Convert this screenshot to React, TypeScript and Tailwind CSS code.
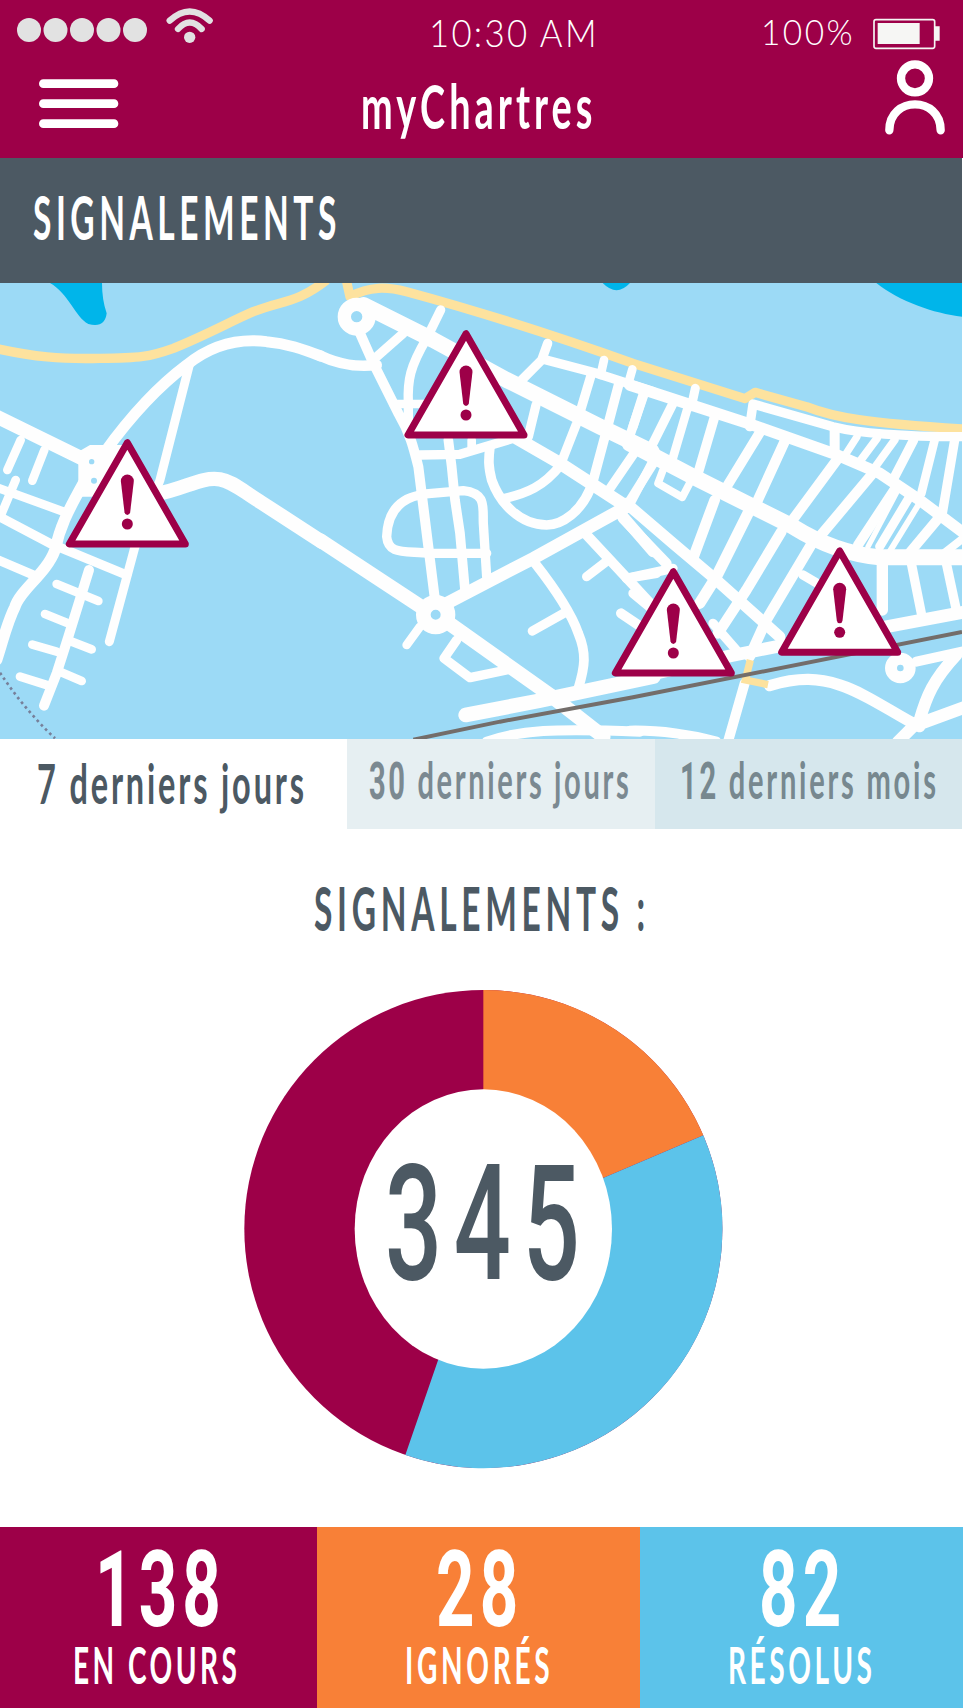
const WHITE = "#fefefe";
const BEACH = "#fde29e";

function Alert({ x, y }: { x: number; y: number }) {
  return (
    <g transform={`translate(${x} ${y})`}>
      <path d="M0 10 L-174 314 L174 314 Z" fill="#fff" stroke="#9d0048" strokeWidth="21" strokeLinejoin="round" />
      <path d="M-19.500 125 A19.500 19.500 0 0 1 19.500 125 L8.500 219 Q7 227 0 227 Q-7 227 -8.500 219 Z" fill="#9d0048" />
      <circle cx="0" cy="254" r="16.500" fill="#9d0048" />
    </g>
  );
}

type Road = [string, number];

const west: Road[] = [
  ["M315 515C420 370 500 300 560 255C640 190 720 175 800 185C860 190 910 208 962 228", 33],
  ["M568 255L480 600L405 800L328 1085", 27],
  ["M470 642C560 625 600 590 660 598C700 605 730 635 780 665L965 785", 43],
  ["M-10 410L245 535", 42],
  ["M62 480L22 570", 26],
  ["M133 510L97 602", 26],
  ["M250 610C200 700 180 740 165 810C140 880 60 930 45 980C20 1030 10 1080 -10 1140", 34],
  ["M-10 622L190 695", 26],
  ["M47 600L0 712", 26],
  ["M-10 706L150 790L380 885", 28],
  ["M-10 838L100 885", 28],
  ["M267 870L205 1070L170 1180L132 1277", 30],
  ["M170 912L295 963", 26],
  ["M135 1002L200 1028", 26],
  ["M97 1094L170 1115", 26],
  ["M215 1085L275 1108", 26],
  ["M60 1190L140 1215", 26],
  ["M180 1175L245 1203", 26],
];

const centre: Road[] = [
  ["M0 227C60 255 110 262 170 255", 32],
  ["M120 160L160 250L235 400C270 460 280 500 295 560L345 960", 30],
  ["M165 235L250 160", 28],
  ["M362 90L320 175C270 260 262 300 265 370V440", 28],
  ["M220 372H330", 26],
  ["M130 75L340 180L560 300L840 440L995 515", 48],
  ["M683 190L665 240L595 310", 28],
  ["M670 238L830 280L1000 335", 28],
  ["M852 240L842 285", 26],
  ["M937 268L925 310", 26],
  ["M812 290L770 430L725 545", 28],
  ["M648 375L625 470", 28],
  ["M897 310L860 450L820 600C790 700 720 735 680 735C600 735 540 670 515 600C505 560 505 540 510 500", 29],
  ["M300 525L420 523L580 475", 28],
  ["M590 475L720 550L920 680", 38],
  ["M722 555C670 620 620 640 555 655", 28],
  ["M385 480L395 560L405 660L420 760L435 930", 29],
  ["M455 480V510", 26],
  ["M300 645C220 660 202 720 200 770C205 825 250 812 330 820H500", 28],
  ["M300 643L430 632C500 640 488 680 490 730L500 890", 28],
  ["M380 970L640 835L920 680", 38],
  ["M942 520L870 625", 28],
  ["M1000 550L925 670", 28],
  ["M973 340L925 480", 28],
  ["M0 781L310 985", 43],
  ["M300 1040L260 1095", 26],
  ["M380 1025L690 1245L850 1370", 43],
  ["M410 1080L372 1135L450 1193L560 1170", 28],
  ["M437 1305L660 1262L1000 1190", 44],
  ["M645 850C700 920 750 990 775 1060C800 1120 795 1160 775 1225", 29],
  ["M637 1053L740 995", 28],
  ["M800 765L870 840L1000 980", 30],
  ["M865 840L800 890", 28],
  ["M900 700L1000 815", 34],
  ["M920 895L1010 880", 28],
  ["M903 1000L970 1045", 30],
  ["M500 1385C600 1350 700 1345 960 1355", 30],
];

const east: Road[] = [
  ["M-10 490L180 590L480 740C560 790 640 822 740 832H990", 48],
  ["M-10 315L345 430L600 520L740 580L860 660L1000 765", 34],
  ["M30 345L0 440", 28],
  ["M120 370L50 510", 28],
  ["M162 390L115 550", 26],
  ["M245 410L195 580", 29],
  ["M58 545L-5 665", 26],
  ["M90 570L75 610L148 652L170 610", 23],
  ["M-20 670L120 790L250 900L440 1070", 34],
  ["M-30 715L100 850", 32],
  ["M-20 895L120 865", 28],
  ["M0 940L60 990", 28],
  ["M245 660L180 835", 32],
  ["M350 690L250 890L200 970", 34],
  ["M445 755L340 930L255 1060", 32],
  ["M537 790L400 1020L350 1130", 32],
  ["M510 885L570 920", 28],
  ["M240 1030L310 1110", 28],
  ["M382 455L275 630", 30],
  ["M457 480L370 670", 31],
  ["M615 535L475 725", 31],
  ["M715 585L560 770", 31],
  ["M790 620L675 795", 30],
  ["M795 630L705 800", 16],
  ["M830 650L740 800", 27],
  ["M865 660L770 815", 18],
  ["M912 720L820 830", 30],
  ["M990 775L920 830", 24],
  ["M350 440L360 372L600 440C700 465 850 470 1000 470", 28],
  ["M605 450V520", 30],
  ["M672 470L640 520", 22],
  ["M732 475L680 545", 24],
  ["M785 480L720 570", 24],
  ["M842 480L780 600", 28],
  ["M905 480L865 640", 26],
  ["M965 480L928 700", 28],
  ["M187 325L175 380", 27],
  ["M748 850V990", 34],
  ["M835 850L865 1000", 28],
  ["M940 850L970 990", 28],
  ["M-10 1198L290 1128L440 1098L760 1040L1000 995", 38],
  ["M850 1145L1000 1112", 30],
  ["M970 1125C900 1200 880 1250 860 1320L795 1385", 36],
  ["M850 1335L1000 1280", 38],
  ["M410 1217C500 1190 560 1195 620 1215C700 1240 780 1300 860 1340", 34],
  ["M335 1210L285 1385", 30],
  ["M-10 1352C80 1350 180 1365 250 1385", 30],
];

function Roads({ items }: { items: Road[] }) {
  return (
    <g fill="none" stroke={WHITE} strokeLinecap="round" strokeLinejoin="round">
      {items.map(([d, w]) => (
        <path key={d} d={d} strokeWidth={w} />
      ))}
    </g>
  );
}

function CityMap() {
  return (
    <svg viewBox="0 9 2886 1368" preserveAspectRatio="none" className="block h-[456px] w-[962px] bg-[#9cdaf6]">
      <path d="M150 9C205 40 225 110 265 132Q315 145 320 100Q306 60 306 9Z" fill="#00b5ea" />
      <path d="M1808 9Q1850 52 1890 9Z" fill="#00b5ea" />
      <path d="M2629 9C2700 65 2800 100 2886 110V9Z" fill="#00b5ea" />
      <g fill="none" stroke={BEACH} strokeWidth="28" strokeLinejoin="round">
        <path d="M-10 206C100 230 180 238 300 235C420 235 450 230 520 205C620 165 700 120 760 95C850 60 890 70 980 0" />
        <path d="M1040 5L1050 50C1110 18 1160 20 1220 35C1460 100 1660 165 1899 250L2235 356L2265 337L2419 380C2500 412 2600 430 2890 447" />
      </g>
      <Roads items={west} />
      <path d="M235 515L270 495H370L320 650H235Z" fill={WHITE} />
      <circle cx="275" cy="545" r="8" fill="#9cdaf6" />
      <circle cx="282" cy="602" r="9" fill="#9cdaf6" />
      <path d="M0 1178Q70 1285 165 1375" fill="none" stroke="#77809a" strokeWidth="8" strokeDasharray="8 10" />
      <g transform="translate(960 0)">
        <Roads items={centre} />
        <circle cx="110" cy="110" r="37" fill="#9cdaf6" stroke={WHITE} strokeWidth="40" />
        <circle cx="347" cy="1004" r="37" fill="#9cdaf6" stroke={WHITE} strokeWidth="44" />
      </g>
      <g transform="translate(1899 0)">
        <Roads items={east} />
        <circle cx="802" cy="1164" r="28" fill="#9cdaf6" stroke={WHITE} strokeWidth="36" />
        <path d="M352 1140L337 1200L405 1214" fill="none" stroke={BEACH} strokeWidth="22" />
      </g>
      <path d="M1240 1379L1500 1325L1899 1252L2886 1056" fill="none" stroke="#736d6a" strokeWidth="12" />
      <Alert x={382} y={478} />
      <Alert x={1398} y={151} />
      <Alert x={2020} y={865} />
      <Alert x={2519} y={803} />
    </svg>
  );
}

function Donut() {
  return (
    <svg viewBox="-1 0 1440 1440" className="block h-[480px] w-[480px]">
      <circle cx="720" cy="720" r="717" fill="#9d0048" />
      <path d="M720 720V3A717 717 0 0 1 1380 439Z" fill="#f88037" />
      <path d="M720 720L1380 439A717 717 0 0 1 486 1398Z" fill="#5cc3ea" />
      <ellipse cx="720" cy="720" rx="386" ry="419" fill="#fff" />
    </svg>
  );
}

export default function App() {
  return (
    <div className="w-[963px] overflow-hidden bg-white font-['Lato',sans-serif] text-[#4c5963]">
      <header className="h-[158px] bg-[#9d0048] text-white">
        <div className="flex h-[56px] items-start">
          <svg viewBox="0 0 660 168" className="h-[56px] w-[220px]">
            <g fill="#e2e2e2">
              <circle cx="87" cy="90" r="36" />
              <circle cx="166.500" cy="90" r="36" />
              <circle cx="246" cy="90" r="36" />
              <circle cx="325.500" cy="90" r="36" />
              <circle cx="405" cy="90" r="36" />
              <circle cx="569" cy="112" r="17" />
            </g>
            <path d="M509 62Q569 7 629 62M534 87Q569 48 605 87" fill="none" stroke="#e2e2e2" strokeWidth="19" strokeLinecap="round" />
          </svg>
          <div className="ml-[209px] w-[332px] pt-[10px]">
            <span className="block origin-left scale-x-[0.94] whitespace-nowrap text-[37px] leading-[46px] font-light tracking-[2.4px]">10:30 AM</span>
          </div>
          <div className="w-[111px] pt-[8px]">
            <span className="block origin-left scale-x-[0.93] whitespace-nowrap text-[36px] leading-[46px] font-light tracking-[2.6px]">100%</span>
          </div>
          <svg viewBox="0 0 204 96" className="mt-[18px] h-[32px] w-[68px]">
            <rect x="6" y="5" width="182" height="86" rx="6" fill="none" stroke="#f6f6f4" strokeWidth="5" />
            <path d="M17 15H143V78H17ZM188 25H203V68H188Z" fill="#f6f6f4" />
          </svg>
        </div>
        <div className="flex items-start">
          <svg viewBox="0 0 240 150" className="mt-[22px] ml-[39px] h-[50px] w-[80px]">
            <path d="M13 17H225M13 77H225M13 137H225" stroke="#fff" strokeWidth="26" strokeLinecap="round" />
          </svg>
          <div className="ml-[242px] w-[523px] pt-[15px]">
            <span className="block origin-left scale-x-[0.62] whitespace-nowrap text-[61px] leading-[70px] font-bold tracking-[6.5px]">myChartres</span>
          </div>
          <svg viewBox="0 0 186 228" className="mt-[3px] h-[76px] w-[62px]">
            <g fill="none" stroke="#fff" strokeWidth="25" strokeLinecap="round">
              <circle cx="93" cy="58" r="42" />
              <path d="M16 214C16 110 170 110 170 214" />
            </g>
          </svg>
        </div>
      </header>
      <div className="h-[125px] w-[962px] bg-[#4c5963] pt-[23px] pl-[33px] text-white">
        <h1 className="origin-left scale-x-[0.54] whitespace-nowrap text-[62px] leading-[70px] font-bold tracking-[8.4px]">SIGNALEMENTS</h1>
      </div>
      <CityMap />
      <nav className="flex h-[90px] w-[962px]">
        <div className="w-[347px] pt-[9px] pl-[37px]">
          <span className="block w-[310px] origin-left scale-x-[0.58] whitespace-nowrap text-[56px] leading-[70px] font-bold tracking-[4.9px]">7 derniers jours</span>
        </div>
        <div className="w-[308px] bg-[#e6eff2] pt-[5px] pl-[22px] text-[#7b8991]">
          <span className="inline-block origin-left scale-x-[0.56] whitespace-nowrap text-[52px] leading-[70px] font-bold tracking-[4.7px]"><span className="font-['Roboto']">30</span> derniers jours</span>
        </div>
        <div className="w-[307px] bg-[#d6e7ed] pt-[5px] pl-[25px] text-[#77888f]">
          <span className="inline-block origin-left scale-x-[0.56] whitespace-nowrap text-[52px] leading-[70px] font-bold tracking-[4.9px]"><span className="font-['Roboto']">12</span> derniers mois</span>
        </div>
      </nav>
      <div className="h-[160px] pt-[43px] pl-[314px]">
        <h2 className="inline-block origin-left scale-x-[0.54] whitespace-nowrap text-[62px] leading-[70px] font-bold tracking-[8.7px]">SIGNALEMENTS :</h2>
      </div>
      <main className="grid h-[538px] grid-cols-[480px] pl-[243px]">
        <div className="col-start-1 row-start-1"><Donut /></div>
        <div className="col-start-1 row-start-1 pt-[135px] pl-[142px]">
          <span className="inline-block origin-left scale-x-[0.62] whitespace-nowrap font-['Roboto'] text-[162px] leading-[200px] font-medium tracking-[19px]">345</span>
        </div>
      </main>
      <footer className="flex h-[181px] text-white">
        <div className="w-[317px] bg-[#9d0048] pt-[19px] pl-[95px]">
          <span className="block origin-left whitespace-nowrap"><span className="inline-block origin-left scale-x-[0.64] font-['Roboto'] text-[105px] leading-[90px] font-bold tracking-[8px]">138</span></span>
          <div className="mt-[3px] -ml-[22px]"><span className="inline-block origin-left scale-x-[0.54] whitespace-nowrap text-[52px] leading-[50px] font-bold tracking-[6.4px]">EN COURS</span></div>
        </div>
        <div className="w-[323px] bg-[#f88037] pt-[19px] pl-[119px]">
          <span className="block whitespace-nowrap"><span className="inline-block origin-left scale-x-[0.64] font-['Roboto'] text-[105px] leading-[90px] font-bold tracking-[8px]">28</span></span>
          <div className="mt-[3px] -ml-[31px]"><span className="inline-block origin-left scale-x-[0.54] whitespace-nowrap text-[52px] leading-[50px] font-bold tracking-[6.8px]">IGNORÉS</span></div>
        </div>
        <div className="w-[323px] bg-[#5cc3ea] pt-[19px] pl-[119px]">
          <span className="block whitespace-nowrap"><span className="inline-block origin-left scale-x-[0.64] font-['Roboto'] text-[105px] leading-[90px] font-bold tracking-[8px]">82</span></span>
          <div className="mt-[3px] -ml-[31px]"><span className="inline-block origin-left scale-x-[0.54] whitespace-nowrap text-[52px] leading-[50px] font-bold tracking-[6.6px]">RÉSOLUS</span></div>
        </div>
      </footer>
    </div>
  );
}
